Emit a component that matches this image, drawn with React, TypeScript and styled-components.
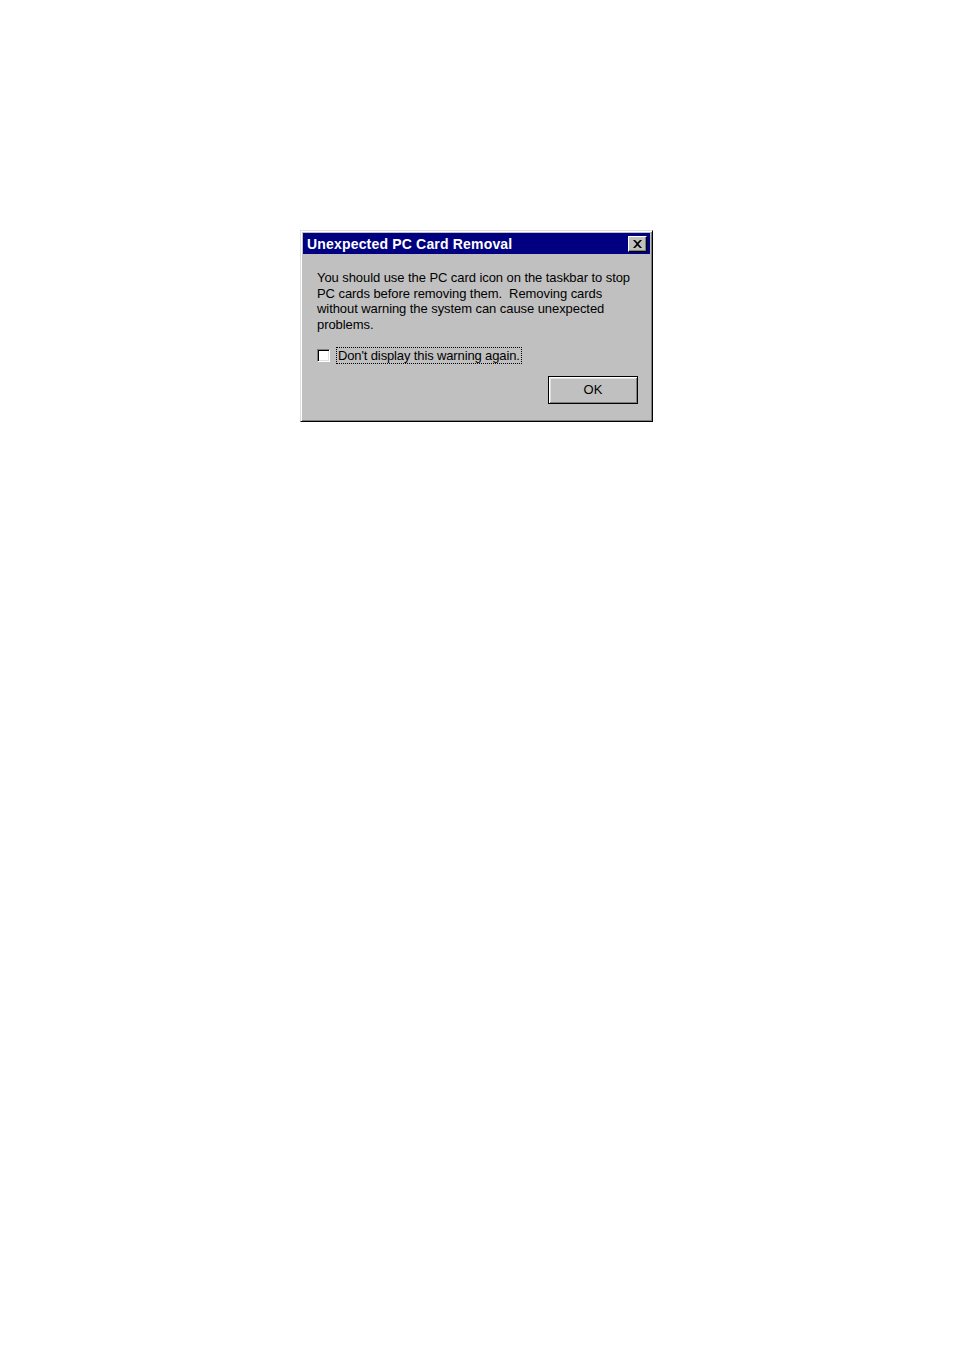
import React from "react";
import styled, { createGlobalStyle } from "styled-components";

const Global = createGlobalStyle`
  html, body { margin: 0; padding: 0; background: #ffffff; }
  body { font-family: "Liberation Sans", Arial, sans-serif; }
`;

const Page = styled.div`
  padding: 230px 0 0 300px;
  min-height: 1351px;
  box-sizing: border-box;
`;

const Window = styled.div`
  width: 353px;
  height: 192px;
  box-sizing: border-box;
  background: #c0c0c0;
  border-style: solid;
  border-width: 1px;
  border-color: #dfdfdf #000000 #000000 #dfdfdf;
  box-shadow: inset 1px 1px 0 #ffffff, inset -1px -1px 0 #808080;
  padding: 2px;
  display: flex;
  flex-direction: column;
`;

const TitleBar = styled.div`
  height: 21px;
  background: #000080;
  display: flex;
  align-items: center;
  justify-content: space-between;
  padding: 0 3px 0 4px;
`;

const Title = styled.span`
  color: #ffffff;
  font-weight: bold;
  font-size: 14px;
  letter-spacing: 0.18px;
`;

const CloseButton = styled.div`
  width: 19px;
  height: 16px;
  box-sizing: border-box;
  background: #c0c0c0;
  border-style: solid;
  border-width: 1px;
  border-color: #ffffff #000000 #000000 #ffffff;
  box-shadow: inset -1px -1px 0 #808080;
  display: flex;
  align-items: center;
  justify-content: center;
`;

const Body = styled.div`
  flex: 1;
  padding: 16px 12px 0 14px;
  display: flex;
  flex-direction: column;
`;

const Message = styled.p`
  margin: 0;
  font-size: 13px;
  line-height: 15.7px;
  color: #000000;
  letter-spacing: -0.07px;
`;

const CheckRow = styled.label`
  display: flex;
  align-items: center;
  gap: 7px;
  margin-top: 15px;
  font-size: 13px;
  color: #000;
`;

const CheckBox = styled.span`
  width: 13px;
  height: 13px;
  box-sizing: border-box;
  background: #ffffff;
  border-style: solid;
  border-width: 1px;
  border-color: #808080 #ffffff #ffffff #808080;
  box-shadow: inset 1px 1px 0 #000000, inset -1px -1px 0 #dfdfdf;
`;

const FocusLabel = styled.span`
  outline: 1px dotted #000;
  padding: 0 1px;
  line-height: 15px;
  letter-spacing: -0.13px;
`;

const ButtonRow = styled.div`
  display: flex;
  justify-content: flex-end;
  margin-top: 13px;
`;

const Button = styled.div`
  width: 90px;
  height: 28px;
  box-sizing: border-box;
  background: #c0c0c0;
  border: 1px solid #000;
  box-shadow: inset 1px 1px 0 #ffffff, inset -1px -1px 0 #808080, inset 2px 2px 0 #dfdfdf;
  display: flex;
  align-items: center;
  justify-content: center;
  font-size: 13px;
  color: #000;
`;

export default function App() {
  return (
    <>
      <Global />
      <Page>
        <Window>
          <TitleBar>
            <Title>Unexpected PC Card Removal</Title>
            <CloseButton>
              <svg width="9" height="8" viewBox="0 0 9 8">
                <path d="M0 0h2l2.5 2.5L7 0h2L5.5 4 9 8H7L4.5 5.5 2 8H0l3.5-4z" fill="#000" />
              </svg>
            </CloseButton>
          </TitleBar>
          <Body>
            <Message>
              You should use the PC card icon on the taskbar to stop PC cards before removing them.&nbsp; Removing cards
              <br />
              without warning the system can cause unexpected problems.
            </Message>
            <CheckRow>
              <CheckBox />
              <FocusLabel>Don't display this warning again.</FocusLabel>
            </CheckRow>
            <ButtonRow>
              <Button>OK</Button>
            </ButtonRow>
          </Body>
        </Window>
      </Page>
    </>
  );
}
